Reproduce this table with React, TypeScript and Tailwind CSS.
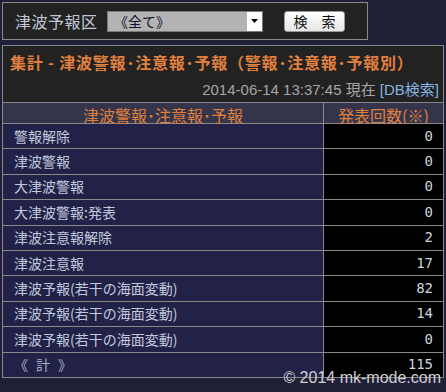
import React from 'react';

// 集計行
type Row = { label: string; count: number };

const rows: Row[] = [
  { label: '警報解除', count: 0 },
  { label: '津波警報', count: 0 },
  { label: '大津波警報', count: 0 },
  { label: '大津波警報:発表', count: 0 },
  { label: '津波注意報解除', count: 2 },
  { label: '津波注意報', count: 17 },
  { label: '津波予報(若干の海面変動)', count: 82 },
  { label: '津波予報(若干の海面変動)', count: 14 },
  { label: '津波予報(若干の海面変動)', count: 0 },
];

const total = rows.reduce((sum, r) => sum + r.count, 0);

const TableRow = ({ label, count }: { label: React.ReactNode; count: number }) => (
  <div className="grid grid-cols-[320px_1fr] h-[25.4px] border-t border-[#888]">
    <div className="bg-[#222249] flex items-center pl-[11px] text-[14px] text-[#c0cadb]">{label}</div>
    <div className="bg-black border-l border-[#888] flex items-center justify-end pr-[10px] font-['DejaVu_Sans_Mono',monospace] text-[14px] text-[#cdd3da]">
      {count}
    </div>
  </div>
);

export default function App() {
  return (
    <div className="min-h-screen bg-[#1f1f38] p-[2px] font-['Noto_Sans_CJK_JP',sans-serif]">
      {/* 検索フォーム */}
      <div className="w-[366px] h-[38px] border border-[#888] bg-[#222] flex items-center">
        <span className="w-[104px] pl-[12px] text-[16px] text-[#c0c8d8] tracking-[0.5px]">津波予報区</span>
        <div className="w-[156px] h-[21px] bg-[#b3b3b3] border border-[#7a7a7a] flex items-center justify-between">
          <span className="pl-[6px] text-[14px] text-[#10102a] leading-none">《全て》</span>
          <span className="w-[15px] h-[19px] bg-white flex items-center justify-center">
            <svg width="7" height="4" viewBox="0 0 7 4">
              <path d="M0 0h7L3.5 4z" fill="#000" />
            </svg>
          </span>
        </div>
        <button className="ml-[21px] w-[61px] h-[21px] rounded-[3px] border border-[#9a9a9a] bg-gradient-to-b from-white to-[#e6e6e6] text-[14px] text-[#111] leading-none">
          検　索
        </button>
      </div>

      {/* 集計パネル */}
      <div className="relative mt-[5px] border border-[#888] bg-[#222]">
        <div className="h-[32px] flex items-center pl-[7px] text-[16px] font-bold tracking-[0.8px] text-[#e0803e] whitespace-nowrap">
          集計 - 津波警報･注意報･予報（警報･注意報･予報別）
        </div>
        <div className="h-[24px] flex items-center justify-end pr-[4px] font-['Liberation_Sans','Noto_Sans_CJK_JP',sans-serif] text-[15px] text-[#a6a6a6]">
          2014-06-14 13:37:45 現在&nbsp;<span className="text-[#86b4e0]">[DB検索]</span>
        </div>

        <div className="grid grid-cols-[320px_1fr] h-[21px] border-t border-[#888] bg-[#34344b] text-[16px] text-[#e0803e]">
          <div className="flex items-center justify-center">津波警報･注意報･予報</div>
          <div className="border-l border-[#888] flex items-center justify-center">発表回数(※)</div>
        </div>

        {rows.map((r, i) => (
          <TableRow key={i} label={r.label} count={r.count} />
        ))}
        <TableRow
          label={
            <span className="text-[#a8b0c4]">
              《<span className="mx-[8px]">計</span>》
            </span>
          }
          count={total}
        />

        <span className="absolute right-[2px] bottom-[-9px] h-[16px] leading-[16px] font-['Liberation_Sans',sans-serif] text-[16px] text-[#cfcfcf] whitespace-nowrap">
          © 2014 mk-mode.com
        </span>
      </div>
    </div>
  );
}
